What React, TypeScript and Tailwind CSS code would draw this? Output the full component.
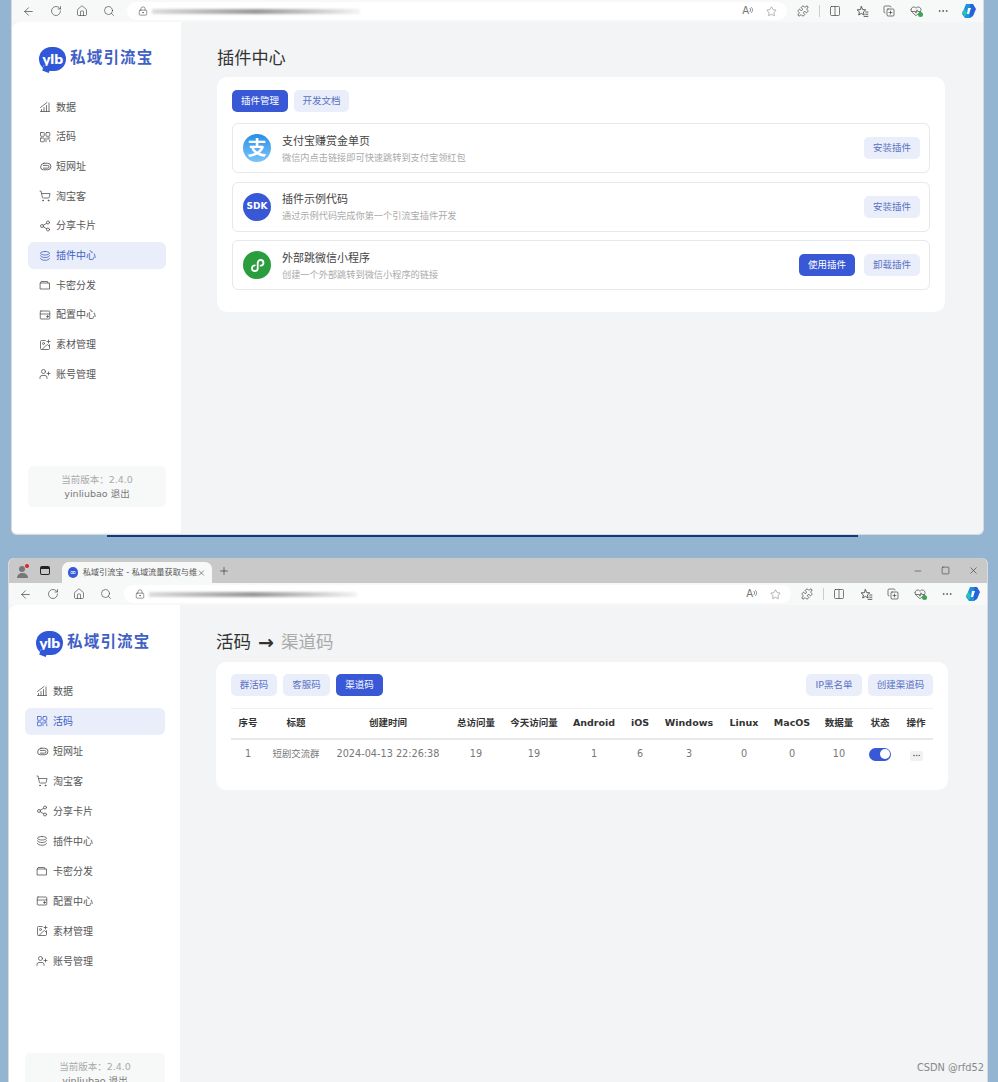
import type { ReactNode } from 'react';
import {
  ArrowLeft,
  Columns2,
  CopyPlus,
  HeartPulse,
  House,
  ImagePlus,
  LockKeyhole,
  Minus,
  MoreHorizontal,
  Plus,
  Puzzle,
  RotateCw,
  Search,
  Share2,
  ShoppingCart,
  Square,
  Star,
  UserPlus,
  X,
} from 'lucide-react';

const svgProps = {
  width: 12,
  height: 12,
  viewBox: '0 0 24 24',
  fill: 'none',
  stroke: 'currentColor',
  strokeWidth: 1.6,
  strokeLinecap: 'round' as const,
  strokeLinejoin: 'round' as const,
};

const ChartIcon = () => (
  <svg {...svgProps}>
    <path d="M3 21h18M5 21v-4M10 21v-8M15 21V9M20 21V4M3 13 16 3" />
  </svg>
);
const CodeIcon = () => (
  <svg {...svgProps}>
    <rect x="3" y="3" width="7.5" height="7.5" rx="1" />
    <rect x="14" y="3" width="7.5" height="7.5" rx="1" />
    <rect x="3" y="14" width="7.5" height="7.5" rx="1" />
    <path d="M14 14v7.5M18 14h3.5M18 14v3M21.5 18v3.5" />
  </svg>
);
const LinkIcon = () => (
  <svg {...svgProps} width={13} height={13}>
    <path d="M9 6h7a6 6 0 0 1 0 12H8a5 5 0 0 1-5-5 7 7 0 0 1 6-7z" />
    <path d="M8 10h8a2.5 2.5 0 0 1 0 5H8" />
  </svg>
);
const StackIcon = () => (
  <svg {...svgProps}>
    <path d="M12 3c5 0 9 1.6 9 3.5S17 10 12 10 3 8.400 3 6.500 7 3 12 3z" />
    <path d="M3 11.500C3 13.400 7 15 12 15s9-1.600 9-3.500M3 17c0 1.900 4 3.500 9 3.500s9-1.600 9-3.500" />
  </svg>
);
const CardIcon = () => (
  <svg {...svgProps}>
    <path d="M3 8h18v12H3zM3 8l1-3h13l1 3" />
  </svg>
);
const ConfigIcon = () => (
  <svg {...svgProps}>
    <rect x="2.5" y="4" width="19" height="16" rx="1.5" />
    <path d="M2.5 10h19" />
    <circle cx="17" cy="15" r="1.6" fill="currentColor" />
  </svg>
);
const FavoritesIcon = () => (
  <svg width="13" height="13" viewBox="0 0 24 24" fill="none" stroke="currentColor" strokeWidth="1.6" strokeLinejoin="round" strokeLinecap="round">
    <path d="M10 3l2.300 5.500 5.700.5-4.300 3.800 1.300 5.700-5-3-5 3 1.300-5.700L2 9l5.700-.5z" />
    <path d="M18 13h4M18 17h4M15 21h7" />
  </svg>
);

const NAV: { label: string; icon: ReactNode }[] = [
  { label: '数据', icon: <ChartIcon /> },
  { label: '活码', icon: <CodeIcon /> },
  { label: '短网址', icon: <LinkIcon /> },
  { label: '淘宝客', icon: <ShoppingCart size={12} strokeWidth={1.6} /> },
  { label: '分享卡片', icon: <Share2 size={12} strokeWidth={1.6} /> },
  { label: '插件中心', icon: <StackIcon /> },
  { label: '卡密分发', icon: <CardIcon /> },
  { label: '配置中心', icon: <ConfigIcon /> },
  { label: '素材管理', icon: <ImagePlus size={12} strokeWidth={1.6} /> },
  { label: '账号管理', icon: <UserPlus size={12} strokeWidth={1.6} /> },
];

const PLUGINS = [
  { title: '支付宝赚赏金单页', desc: '微信内点击链接即可快速跳转到支付宝领红包', kind: 'alipay', installed: false },
  { title: '插件示例代码', desc: '通过示例代码完成你第一个引流宝插件开发', kind: 'sdk', installed: false },
  { title: '外部跳微信小程序', desc: '创建一个外部跳转到微信小程序的链接', kind: 'mini', installed: true },
];

const COLUMNS = [
  { label: '序号', width: 'w-[34px]', value: '1' },
  { label: '标题', width: 'w-[62px]', value: '短剧交流群' },
  { label: '创建时间', width: 'w-[122px]', value: '2024-04-13 22:26:38' },
  { label: '总访问量', width: 'w-[54px]', value: '19' },
  { label: '今天访问量', width: 'w-[62px]', value: '19' },
  { label: 'Android', width: 'w-[58px]', value: '1' },
  { label: 'iOS', width: 'w-[34px]', value: '6' },
  { label: 'Windows', width: 'w-[64px]', value: '3' },
  { label: 'Linux', width: 'w-[46px]', value: '0' },
  { label: 'MacOS', width: 'w-[50px]', value: '0' },
  { label: '数据量', width: 'w-[44px]', value: '10' },
];

function Btn({ children, primary, className = '' }: { children: ReactNode; primary?: boolean; className?: string }) {
  return (
    <button
      className={`h-[22px] rounded-[5px] text-[9.5px] leading-none ${
        primary ? 'bg-[#3858d6] text-white' : 'bg-[#e9eefa] text-[#5a72c4]'
      } ${className}`}
    >
      {children}
    </button>
  );
}

function Toolbar() {
  return (
    <div className="flex h-[22px] shrink-0 items-center bg-[#f7f8f8] pl-[10px] pr-[6px] text-[#444]">
      <div className="flex w-[105px] shrink-0 items-center gap-[14.5px]">
        <ArrowLeft size={13} strokeWidth={1.3} />
        <RotateCw size={12} strokeWidth={1.3} />
        <House size={12} strokeWidth={1.3} />
        <Search size={12} strokeWidth={1.3} />
      </div>
      <div className="flex h-[18px] flex-1 items-center rounded-full bg-white pl-[11px] pr-[10px]">
        <LockKeyhole size={10} strokeWidth={1.3} />
        <div className="ml-[4px] h-[5px] w-[208px] bg-gradient-to-r from-[#ddd] via-[#999] to-[#f4f4f4] blur-[1px]" />
        <div className="ml-auto flex items-center gap-[13px] text-[#777]">
          <span className="flex items-center text-[10px] leading-none">
            A
            <svg width="4" height="8" viewBox="0 0 4 8" fill="none" stroke="currentColor" strokeWidth="0.8">
              <path d="M0.500 1c1.500 1 1.500 3 0 4M2 0c2 1.500 2 4.500 0 6" />
            </svg>
          </span>
          <Star size={11} strokeWidth={1.2} />
        </div>
      </div>
      <div className="ml-[10px] flex items-center text-[#444]">
        <Puzzle size={12} strokeWidth={1.4} />
        <div className="mx-[9.5px] h-[12px] w-px bg-[#ccc]" />
        <Columns2 size={12} strokeWidth={1.4} />
        <span className="ml-[15px]"><FavoritesIcon /></span>
        <CopyPlus size={12} strokeWidth={1.4} className="ml-[14px]" />
        <span className="relative ml-[15px]">
          <HeartPulse size={12} strokeWidth={1.4} />
          <span className="absolute bottom-0 right-[-1px] h-[5px] w-[5px] rounded-full bg-[#3aa655]" />
        </span>
        <MoreHorizontal size={12} strokeWidth={1.4} className="ml-[15px]" />
        <svg width="16" height="16" viewBox="0 0 16 16" className="ml-[12px]">
          <path d="M5 1h5l2 3-3 11H4L1 11z" fill="#1f8fe0" />
          <path d="M9 1h3l3 5-3 7-3 2z" fill="#2563d8" />
          <path d="M1 9l3-3 2 4-2 4z" fill="#27c4b0" />
          <path d="M7 5h3L8 11H6z" fill="#ffffff" />
        </svg>
      </div>
    </div>
  );
}

function Sidebar({ active, sizeClass, gapClass }: { active: string; sizeClass: string; gapClass: string }) {
  return (
    <aside className={`flex shrink-0 flex-col rounded-tl-[8px] bg-white pl-[16px] pr-[15px] ${sizeClass}`}>
      <div className="flex items-center pl-[11px]">
        <div className="relative flex h-[24px] w-[27px] items-center justify-center rounded-full bg-[#2f57d8] text-[13px] font-bold leading-none tracking-[-0.5px] text-white">
          ylb
          <span className="absolute bottom-[-1px] left-[4px] h-[6px] w-[7px] rotate-[20deg] bg-[#2f57d8]" />
        </div>
        <span className="ml-[4px] text-[15.5px] font-bold leading-none tracking-[1.2px] text-[#3f60c4]">私域引流宝</span>
      </div>
      <nav className={`mt-[23px] flex flex-col ${gapClass}`}>
        {NAV.map(item => (
          <div
            key={item.label}
            className={`flex h-[26.5px] items-center rounded-[6px] pl-[11px] text-[10px] ${
              item.label === active ? 'bg-[#e9eefa] text-[#3f60c4]' : 'text-[#555]'
            }`}
          >
            <span className="flex w-[17px] shrink-0">{item.icon}</span>
            <span>{item.label}</span>
          </div>
        ))}
      </nav>
      <div className="mt-auto mb-[26px] flex h-[41px] shrink-0 flex-col items-center justify-center rounded-[5px] bg-[#f7f8f8] text-[9.5px] leading-[14px]">
        <span className="text-[#aaa]">当前版本：2.4.0</span>
        <span className="text-[#777]">yinliubao 退出</span>
      </div>
    </aside>
  );
}

function PluginIcon({ kind }: { kind: string }) {
  if (kind === 'alipay') {
    return (
      <div className="flex h-[28px] w-[28px] items-center justify-center rounded-full bg-gradient-to-b from-[#1f8fe8] to-[#7cc4f5] text-[19px] font-bold leading-none text-white">
        支
      </div>
    );
  }
  if (kind === 'sdk') {
    return (
      <div className="flex h-[28px] w-[28px] items-center justify-center rounded-full bg-[#3858d6] text-[9px] font-bold leading-none text-white">
        SDK
      </div>
    );
  }
  return (
    <div className="flex h-[28px] w-[28px] items-center justify-center rounded-full bg-[#2a9d3f]">
      <svg width="17" height="17" viewBox="0 0 16 16" fill="none" stroke="#fff" strokeWidth="1.700" strokeLinecap="round">
        <path d="M5.500 7.800A2.700 2.700 0 1 0 8.200 10.500V5.500A2.700 2.700 0 1 1 10.900 8.200" />
      </svg>
    </div>
  );
}

export default function App() {
  return (
    <div className="relative flex h-[1082px] w-[998px] flex-col overflow-hidden bg-[#94b5d2] font-['DejaVu_Sans','Noto_Sans_CJK_SC',sans-serif]">
      {/* 上面的窗口：插件中心 */}
      <div className="ml-[11px] flex h-[535px] w-[973px] shrink-0 flex-col overflow-hidden rounded-b-[6px] border-x border-b border-[#d8dadc] bg-[#f2f4f5]">
        <Toolbar />
        <div className="flex min-h-0 flex-1">
          <Sidebar active="插件中心" sizeClass="h-[511px] w-[169px] pt-[25px]" gapClass="gap-[3.17px]" />
          <main className="flex-1 pl-[36px] pr-[38px] pt-[24px]">
            <h1 className="h-[24px] text-[17.2px] font-normal leading-[24px] text-[#333]">插件中心</h1>
            <section className="mt-[7px] rounded-[10px] bg-white px-[15px] pb-[22px] pt-[13px]">
              <div className="flex gap-[6px]">
                <Btn primary className="w-[56px]">插件管理</Btn>
                <Btn className="w-[55px]">开发文档</Btn>
              </div>
              <div className="mt-[11px] flex flex-col gap-[8.5px]">
                {PLUGINS.map(p => (
                  <div key={p.title} className="flex h-[50px] items-center rounded-[6px] border border-[#e6e8ea] pl-[10px] pr-[9px]">
                    <PluginIcon kind={p.kind} />
                    <div className="ml-[11px] pt-[1.5px]">
                      <div className="text-[11px] leading-[15px] text-[#444]">{p.title}</div>
                      <div className="mt-[2px] text-[9.2px] leading-[13px] text-[#aaa]">{p.desc}</div>
                    </div>
                    <div className="ml-auto flex gap-[9px]">
                      {p.installed && <Btn primary className="w-[56px]">使用插件</Btn>}
                      <Btn className="w-[56px]">{p.installed ? '卸载插件' : '安装插件'}</Btn>
                    </div>
                  </div>
                ))}
              </div>
            </section>
          </main>
        </div>
      </div>

      {/* 桌面壁纸露出的部分 */}
      <div className="h-[23px] shrink-0">
        <div className="ml-[107px] h-[2px] w-[751px] bg-[#123a7a]" />
      </div>

      {/* 下面的窗口：渠道码 */}
      <div className="ml-[8px] flex min-h-0 w-[980px] flex-1 flex-col overflow-hidden rounded-t-[6px] border-x border-[#d8dadc] bg-[#f2f4f5]">
        <div className="flex h-[25px] shrink-0 items-center bg-[#c9c9c9] pl-[7px] pr-[8px] text-[#333]">
          <span className="relative flex h-[14px] w-[12px] flex-col items-center justify-end">
            <span className="h-[6px] w-[6px] rounded-full bg-[#777]" />
            <span className="mt-[1px] h-[5px] w-[11px] rounded-t-full bg-[#777]" />
            <span className="absolute right-[-1px] top-0 h-[4px] w-[4px] rounded-full bg-[#d8232a]" />
          </span>
          <span className="ml-[12px] h-[9px] w-[10px] rounded-[2px] border border-[#222] border-t-[3px]" />
          <div className="ml-[12px] mt-[4px] flex h-[21px] w-[150px] items-center rounded-t-[7px] bg-[#f7f8f8] pl-[6px] pr-[6px]">
            <span className="flex h-[11px] w-[11px] items-center justify-center rounded-full bg-[#3858d6] text-[8px] leading-none text-white">∞</span>
            <span className="ml-[5px] whitespace-nowrap text-[8.2px] text-[#555]">私域引流宝 - 私域流量获取与维</span>
            <X size={10} strokeWidth={1.5} className="ml-auto" />
          </div>
          <Plus size={12} strokeWidth={1.3} className="ml-[6px]" />
          <div className="ml-auto flex items-center gap-[18px]">
            <Minus size={10} strokeWidth={1.3} />
            <Square size={9} strokeWidth={1.5} />
            <X size={11} strokeWidth={1.3} />
          </div>
        </div>
        <Toolbar />
        <div className="flex min-h-0 flex-1">
          <Sidebar active="活码" sizeClass="h-[515px] w-[171px] pt-[26px]" gapClass="gap-[3.5px]" />
          <main className="flex-1 pl-[36px] pr-[39px] pt-[25px]">
            <h1 className="flex h-[24px] items-center text-[17.5px] font-normal leading-[24px] text-[#333]">
              活码
              <span className="mx-[7px] text-[19px] font-bold">→</span>
              <span className="text-[#aaa]">渠道码</span>
            </h1>
            <section className="mt-[8px] h-[128px] rounded-[10px] bg-white px-[15px] pt-[12px]">
              <div className="flex gap-[6px]">
                <Btn className="w-[46px]">群活码</Btn>
                <Btn className="w-[47px]">客服码</Btn>
                <Btn primary className="w-[47px]">渠道码</Btn>
                <Btn className="ml-auto w-[56px]">IP黑名单</Btn>
                <Btn className="w-[65px]">创建渠道码</Btn>
              </div>
              <table className="mt-[12px] w-[702px] table-fixed border-t border-[#f0f1f2] text-center">
                <thead>
                  <tr className="h-[30px] border-b-2 border-[#e6e8ea] text-[9.5px] font-bold text-[#333]">
                    {COLUMNS.map(c => (
                      <th key={c.label} className={`p-0 ${c.width}`}>{c.label}</th>
                    ))}
                    <th className="w-[38px] p-0">状态</th>
                    <th className="w-[34px] p-0">操作</th>
                  </tr>
                </thead>
                <tbody>
                  <tr className="h-[30px] text-[#777]">
                    {COLUMNS.map(c => (
                      <td key={c.label} className={`whitespace-nowrap p-0 ${c.label === '标题' ? 'text-[9.4px]' : 'text-[9.7px]'}`}>{c.value}</td>
                    ))}
                    <td className="p-0">
                      <span className="mx-auto flex h-[13px] w-[22px] items-center justify-end rounded-full bg-[#3858d6] pr-[1.5px]">
                        <span className="h-[10px] w-[10px] rounded-full bg-white" />
                      </span>
                    </td>
                    <td className="p-0">
                      <span className="mx-auto mt-[3px] flex h-[10px] w-[13px] items-center justify-center rounded-[2px] bg-[#f0f1f2] text-[#666]">
                        <MoreHorizontal size={9} strokeWidth={2} />
                      </span>
                    </td>
                  </tr>
                </tbody>
              </table>
            </section>
          </main>
        </div>
      </div>

      <span className="absolute bottom-[7px] right-[14px] text-[9.8px] leading-[14px] text-[#888]">CSDN @rfd52</span>
    </div>
  );
}
